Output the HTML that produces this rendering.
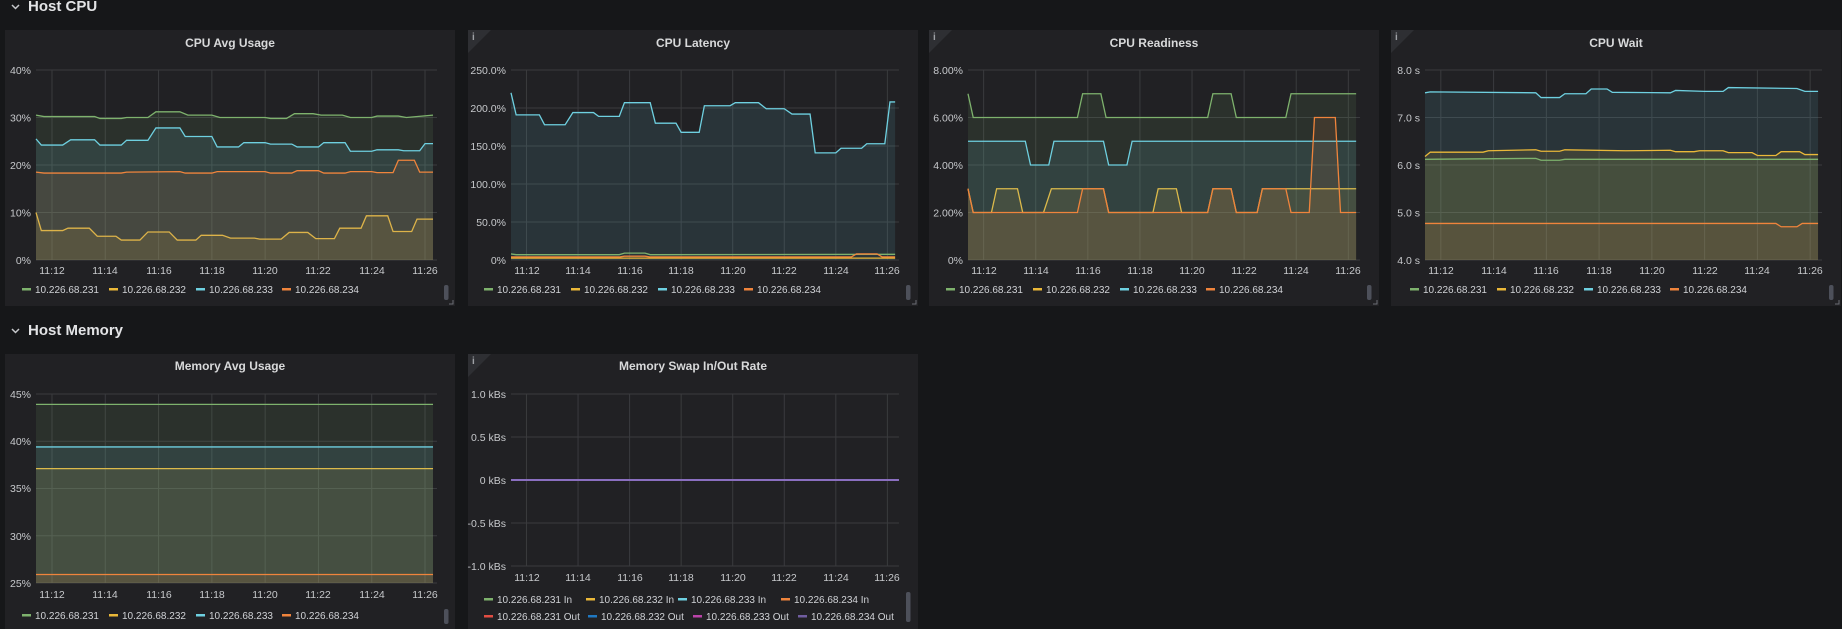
<!DOCTYPE html>
<html><head><meta charset="utf-8"><style>
html,body{margin:0;padding:0;background:#161719;width:1842px;height:629px;overflow:hidden}
svg{display:block}
text{font-family:"Liberation Sans",sans-serif}
.t{font-size:12px;fill:#d8d9da;text-anchor:middle;font-weight:bold}
.ya{font-size:10.5px;fill:#c7c9cc;text-anchor:end}
.xa{font-size:10.5px;fill:#c7c9cc;text-anchor:middle}
.lg{font-size:10px;fill:#d0d2d6}
.h{font-size:15px;fill:#e3e4e6;font-weight:bold}
.g line{stroke:#3a3b3e;vector-effect:non-scaling-stroke;stroke-width:1}
.s polyline{fill:none;stroke-width:1.3;vector-effect:non-scaling-stroke}
.s polygon{stroke:none;fill-opacity:.11}
</style></head><body>
<svg width="1842" height="629" viewBox="0 0 1842 629" xmlns="http://www.w3.org/2000/svg">
<rect width="1842" height="629" fill="#161719"/>
<path d="M12 5 l3.5 3.5 l3.5 -3.5" fill="none" stroke="#c7c9cc" stroke-width="1.5"/>
<text class="h" x="28" y="11">Host CPU</text>
<path d="M12 329 l3.5 3.5 l3.5 -3.5" fill="none" stroke="#c7c9cc" stroke-width="1.5"/>
<text class="h" x="28" y="335">Host Memory</text>

<g fill="#212124">
<rect x="5" y="30" width="450" height="276"/>
<rect x="468" y="30" width="450" height="276"/>
<rect x="929" y="30" width="450" height="276"/>
<rect x="1391" y="30" width="450" height="276"/>
<rect x="5" y="354" width="450" height="280"/>
<rect x="468" y="354" width="450" height="280"/>
</g>
<g fill="#2e2f33">
<path d="M468 30 h23 l-23 23z"/><path d="M929 30 h23 l-23 23z"/><path d="M1391 30 h23 l-23 23z"/><path d="M468 354 h23 l-23 23z"/>
</g>
<g font-family="Liberation Serif,serif" font-size="10" fill="#9fa1a6" font-weight="bold">
<text x="472" y="40">i</text><text x="933" y="40">i</text><text x="1395" y="40">i</text><text x="472" y="364">i</text>
</g>
<text class="t" x="230" y="47">CPU Avg Usage</text>
<text class="t" x="693" y="47">CPU Latency</text>
<text class="t" x="1154" y="47">CPU Readiness</text>
<text class="t" x="1616" y="47">CPU Wait</text>
<text class="t" x="230" y="370">Memory Avg Usage</text>
<text class="t" x="693" y="370">Memory Swap In/Out Rate</text>

<g transform="translate(36,260) scale(26.645,-4.75) translate(-11.4,0)">
<g class="g"><line x1="11.4" x2="26.45" y1="40" y2="40"/><line x1="11.4" x2="26.45" y1="30" y2="30"/><line x1="11.4" x2="26.45" y1="20" y2="20"/><line x1="11.4" x2="26.45" y1="10" y2="10"/><line x1="11.4" x2="26.45" y1="0" y2="0"/>
<line x1="12" x2="12" y1="0" y2="40"/><line x1="14" x2="14" y1="0" y2="40"/><line x1="16" x2="16" y1="0" y2="40"/><line x1="18" x2="18" y1="0" y2="40"/><line x1="20" x2="20" y1="0" y2="40"/><line x1="22" x2="22" y1="0" y2="40"/><line x1="24" x2="24" y1="0" y2="40"/><line x1="26" x2="26" y1="0" y2="40"/></g>
<g class="s">
<polygon fill="#7eb26d" points="11.4,0 11.4,30.5 11.7,30.2 13.6,30.2 13.8,29.8 14.6,29.8 14.8,30 15.6,30 15.9,31.2 16.8,31.2 17.1,30.5 18,30.5 18.3,30 20,30 20.2,29.8 20.8,29.8 21.1,30.8 21.8,30.8 22.1,30.5 22.9,30.5 23.2,30 24,30 24.2,30.3 25,30.3 25.3,30 26.3,30.5 26.3,0"/>
<polyline stroke="#7eb26d" points="11.4,30.5 11.7,30.2 13.6,30.2 13.8,29.8 14.6,29.8 14.8,30 15.6,30 15.9,31.2 16.8,31.2 17.1,30.5 18,30.5 18.3,30 20,30 20.2,29.8 20.8,29.8 21.1,30.8 21.8,30.8 22.1,30.5 22.9,30.5 23.2,30 24,30 24.2,30.3 25,30.3 25.3,30 26.3,30.5"/>
<polygon fill="#eab839" points="11.4,0 11.4,10 11.6,6.2 12.4,6.2 12.6,6.7 13.4,6.7 13.7,5 14.4,5 14.6,4.2 15.3,4.2 15.6,5.9 16.4,5.9 16.7,4.2 17.4,4.2 17.6,5.2 18.4,5.2 18.7,4.6 19.6,4.6 19.8,4.4 20.6,4.4 20.9,5.8 21.6,5.8 21.9,4.5 22.6,4.5 22.8,6.7 23.6,6.7 23.8,9.3 24.6,9.3 24.8,6 25.5,6 25.7,8.6 26.3,8.6 26.3,0"/>
<polyline stroke="#eab839" points="11.4,10 11.6,6.2 12.4,6.2 12.6,6.7 13.4,6.7 13.7,5 14.4,5 14.6,4.2 15.3,4.2 15.6,5.9 16.4,5.9 16.7,4.2 17.4,4.2 17.6,5.2 18.4,5.2 18.7,4.6 19.6,4.6 19.8,4.4 20.6,4.4 20.9,5.8 21.6,5.8 21.9,4.5 22.6,4.5 22.8,6.7 23.6,6.7 23.8,9.3 24.6,9.3 24.8,6 25.5,6 25.7,8.6 26.3,8.6"/>
<polygon fill="#6ed0e0" points="11.4,0 11.4,25.5 11.6,24.2 12.4,24.2 12.7,25.3 13.6,25.3 13.8,24.2 14.6,24.2 14.8,25.2 15.6,25.2 15.9,27.8 16.8,27.8 17,26 18,26 18.2,23.8 19,23.8 19.2,24.7 20,24.7 20.2,24.4 21,24.4 21.2,23.8 22,23.8 22.2,24.7 23,24.7 23.2,22.9 24,22.9 24.2,23.2 25,23.2 25.2,23 25.8,23 26,24.5 26.3,24.5 26.3,0"/>
<polyline stroke="#6ed0e0" points="11.4,25.5 11.6,24.2 12.4,24.2 12.7,25.3 13.6,25.3 13.8,24.2 14.6,24.2 14.8,25.2 15.6,25.2 15.9,27.8 16.8,27.8 17,26 18,26 18.2,23.8 19,23.8 19.2,24.7 20,24.7 20.2,24.4 21,24.4 21.2,23.8 22,23.8 22.2,24.7 23,24.7 23.2,22.9 24,22.9 24.2,23.2 25,23.2 25.2,23 25.8,23 26,24.5 26.3,24.5"/>
<polygon fill="#ef843c" points="11.4,0 11.4,18.5 11.7,18.3 14.6,18.3 14.8,18.5 16.8,18.6 17,18.3 18,18.3 18.2,18.6 20,18.6 20.2,18.3 21,18.3 21.2,18.8 22,18.8 22.2,18.3 23,18.3 23.2,18.6 24,18.6 24.2,18.4 24.8,18.4 25,21 25.6,21 25.8,18.5 26.3,18.5 26.3,0"/>
<polyline stroke="#ef843c" points="11.4,18.5 11.7,18.3 14.6,18.3 14.8,18.5 16.8,18.6 17,18.3 18,18.3 18.2,18.6 20,18.6 20.2,18.3 21,18.3 21.2,18.8 22,18.8 22.2,18.3 23,18.3 23.2,18.6 24,18.6 24.2,18.4 24.8,18.4 25,21 25.6,21 25.8,18.5 26.3,18.5"/>
</g></g>
<g class="ya"><text x="31" y="74">40%</text><text x="31" y="121.5">30%</text><text x="31" y="169">20%</text><text x="31" y="216.5">10%</text><text x="31" y="264">0%</text></g>
<g class="xa"><text x="52" y="274">11:12</text><text x="105" y="274">11:14</text><text x="159" y="274">11:16</text><text x="212" y="274">11:18</text><text x="265" y="274">11:20</text><text x="318" y="274">11:22</text><text x="372" y="274">11:24</text><text x="425" y="274">11:26</text></g>

<g transform="translate(511,260) scale(25.78,-0.76) translate(-11.4,0)">
<g class="g"><line x1="11.4" x2="26.45" y1="250" y2="250"/><line x1="11.4" x2="26.45" y1="200" y2="200"/><line x1="11.4" x2="26.45" y1="150" y2="150"/><line x1="11.4" x2="26.45" y1="100" y2="100"/><line x1="11.4" x2="26.45" y1="50" y2="50"/><line x1="11.4" x2="26.45" y1="0" y2="0"/>
<line x1="12" x2="12" y1="0" y2="250"/><line x1="14" x2="14" y1="0" y2="250"/><line x1="16" x2="16" y1="0" y2="250"/><line x1="18" x2="18" y1="0" y2="250"/><line x1="20" x2="20" y1="0" y2="250"/><line x1="22" x2="22" y1="0" y2="250"/><line x1="24" x2="24" y1="0" y2="250"/><line x1="26" x2="26" y1="0" y2="250"/></g>
<g class="s">
<polygon fill="#6ed0e0" points="11.4,0 11.4,220 11.6,191 12.5,191 12.7,178 13.5,178 13.8,194 14.6,194 14.8,189 15.6,189 15.8,207 16.8,207 17,180 17.8,180 18,168 18.7,168 18.9,203 19.9,203 20.1,207 21,207 21.3,199 22,199 22.3,192 23,192 23.2,141 24,141 24.2,147 25,147 25.2,153 25.9,153 26.1,208 26.3,208 26.3,0"/>
<polyline stroke="#6ed0e0" points="11.4,220 11.6,191 12.5,191 12.7,178 13.5,178 13.8,194 14.6,194 14.8,189 15.6,189 15.8,207 16.8,207 17,180 17.8,180 18,168 18.7,168 18.9,203 19.9,203 20.1,207 21,207 21.3,199 22,199 22.3,192 23,192 23.2,141 24,141 24.2,147 25,147 25.2,153 25.9,153 26.1,208 26.3,208"/>
<polyline stroke="#7eb26d" points="11.4,8 11.6,7 15.6,7 15.8,9 16.6,9 16.8,7 26.3,7.5"/>
<polyline stroke="#eab839" points="11.4,2.5 26.3,2.5"/>
<polyline stroke="#ef843c" points="11.4,4 15.6,4 15.8,5 16.6,5 16.8,4 24.6,4 24.8,8 25.6,8 25.8,4 26.3,4"/>
</g></g>
<g class="ya"><text x="506" y="74">250.0%</text><text x="506" y="112">200.0%</text><text x="506" y="150">150.0%</text><text x="506" y="188">100.0%</text><text x="506" y="226">50.0%</text><text x="506" y="264">0%</text></g>
<g class="xa"><text x="527" y="274">11:12</text><text x="578" y="274">11:14</text><text x="630" y="274">11:16</text><text x="681" y="274">11:18</text><text x="733" y="274">11:20</text><text x="784" y="274">11:22</text><text x="836" y="274">11:24</text><text x="887" y="274">11:26</text></g>

<g transform="translate(968,260) scale(26.05,-23.75) translate(-11.4,0)">
<g class="g"><line x1="11.4" x2="26.45" y1="8" y2="8"/><line x1="11.4" x2="26.45" y1="6" y2="6"/><line x1="11.4" x2="26.45" y1="4" y2="4"/><line x1="11.4" x2="26.45" y1="2" y2="2"/><line x1="11.4" x2="26.45" y1="0" y2="0"/>
<line x1="12" x2="12" y1="0" y2="8"/><line x1="14" x2="14" y1="0" y2="8"/><line x1="16" x2="16" y1="0" y2="8"/><line x1="18" x2="18" y1="0" y2="8"/><line x1="20" x2="20" y1="0" y2="8"/><line x1="22" x2="22" y1="0" y2="8"/><line x1="24" x2="24" y1="0" y2="8"/><line x1="26" x2="26" y1="0" y2="8"/></g>
<g class="s">
<polygon fill="#7eb26d" points="11.4,0 11.4,7 11.6,6 15.6,6 15.8,7 16.5,7 16.7,6 20.6,6 20.8,7 21.5,7 21.7,6 23.6,6 23.8,7 26.3,7 26.3,0"/>
<polyline stroke="#7eb26d" points="11.4,7 11.6,6 15.6,6 15.8,7 16.5,7 16.7,6 20.6,6 20.8,7 21.5,7 21.7,6 23.6,6 23.8,7 26.3,7"/>
<polygon fill="#eab839" points="11.4,0 11.4,3 11.6,2 12.3,2 12.5,3 13.3,3 13.5,2 14.3,2 14.6,3 16.6,3 16.8,2 18.5,2 18.7,3 19.4,3 19.6,2 20.6,2 20.8,3 21.5,3 21.7,2 22.5,2 22.7,3 26.3,3 26.3,0"/>
<polyline stroke="#eab839" points="11.4,3 11.6,2 12.3,2 12.5,3 13.3,3 13.5,2 14.3,2 14.6,3 16.6,3 16.8,2 18.5,2 18.7,3 19.4,3 19.6,2 20.6,2 20.8,3 21.5,3 21.7,2 22.5,2 22.7,3 26.3,3"/>
<polygon fill="#6ed0e0" points="11.4,0 11.4,5 13.6,5 13.8,4 14.5,4 14.7,5 16.6,5 16.8,4 17.5,4 17.7,5 26.3,5 26.3,0"/>
<polyline stroke="#6ed0e0" points="11.4,5 13.6,5 13.8,4 14.5,4 14.7,5 16.6,5 16.8,4 17.5,4 17.7,5 26.3,5"/>
<polygon fill="#ef843c" points="11.4,0 11.4,3 11.6,2 15.6,2 15.8,3 16.6,3 16.8,2 20.6,2 20.8,3 21.5,3 21.7,2 22.5,2 22.7,3 23.6,3 23.8,2 24.5,2 24.7,6 25.5,6 25.7,2 26.3,2 26.3,0"/>
<polyline stroke="#ef843c" points="11.4,3 11.6,2 15.6,2 15.8,3 16.6,3 16.8,2 20.6,2 20.8,3 21.5,3 21.7,2 22.5,2 22.7,3 23.6,3 23.8,2 24.5,2 24.7,6 25.5,6 25.7,2 26.3,2"/>
</g></g>
<g class="ya"><text x="963" y="74">8.00%</text><text x="963" y="121.5">6.00%</text><text x="963" y="169">4.00%</text><text x="963" y="216.5">2.00%</text><text x="963" y="264">0%</text></g>
<g class="xa"><text x="984" y="274">11:12</text><text x="1036" y="274">11:14</text><text x="1088" y="274">11:16</text><text x="1140" y="274">11:18</text><text x="1192" y="274">11:20</text><text x="1244" y="274">11:22</text><text x="1296" y="274">11:24</text><text x="1348" y="274">11:26</text></g>

<g transform="translate(1425,260) scale(26.38,-47.5) translate(-11.4,-4)">
<g class="g"><line x1="11.4" x2="26.45" y1="8" y2="8"/><line x1="11.4" x2="26.45" y1="7" y2="7"/><line x1="11.4" x2="26.45" y1="6" y2="6"/><line x1="11.4" x2="26.45" y1="5" y2="5"/><line x1="11.4" x2="26.45" y1="4" y2="4"/>
<line x1="12" x2="12" y1="4" y2="8"/><line x1="14" x2="14" y1="4" y2="8"/><line x1="16" x2="16" y1="4" y2="8"/><line x1="18" x2="18" y1="4" y2="8"/><line x1="20" x2="20" y1="4" y2="8"/><line x1="22" x2="22" y1="4" y2="8"/><line x1="24" x2="24" y1="4" y2="8"/><line x1="26" x2="26" y1="4" y2="8"/></g>
<g class="s">
<polygon fill="#6ed0e0" points="11.4,4 11.4,7.52 11.6,7.54 15.6,7.52 15.8,7.42 16.5,7.42 16.7,7.5 17.5,7.5 17.7,7.6 18.3,7.6 18.5,7.53 20.7,7.52 20.9,7.57 22,7.55 22.7,7.55 22.9,7.63 25.5,7.61 25.8,7.55 26.3,7.55 26.3,4"/>
<polyline stroke="#6ed0e0" points="11.4,7.52 11.6,7.54 15.6,7.52 15.8,7.42 16.5,7.42 16.7,7.5 17.5,7.5 17.7,7.6 18.3,7.6 18.5,7.53 20.7,7.52 20.9,7.57 22,7.55 22.7,7.55 22.9,7.63 25.5,7.61 25.8,7.55 26.3,7.55"/>
<polygon fill="#eab839" points="11.4,4 11.4,6.18 11.6,6.27 13.6,6.27 13.8,6.3 15.6,6.32 15.8,6.29 16.5,6.29 16.7,6.32 19,6.3 20.7,6.31 20.9,6.28 21.6,6.28 21.8,6.3 22.7,6.3 22.9,6.26 23.8,6.26 24,6.2 24.7,6.2 24.9,6.28 25.6,6.28 25.8,6.22 26.3,6.22 26.3,4"/>
<polyline stroke="#eab839" points="11.4,6.18 11.6,6.27 13.6,6.27 13.8,6.3 15.6,6.32 15.8,6.29 16.5,6.29 16.7,6.32 19,6.3 20.7,6.31 20.9,6.28 21.6,6.28 21.8,6.3 22.7,6.3 22.9,6.26 23.8,6.26 24,6.2 24.7,6.2 24.9,6.28 25.6,6.28 25.8,6.22 26.3,6.22"/>
<polygon fill="#7eb26d" points="11.4,4 11.4,6.12 15.6,6.14 15.8,6.1 16.5,6.1 16.7,6.12 26.3,6.12 26.3,4"/>
<polyline stroke="#7eb26d" points="11.4,6.12 15.6,6.14 15.8,6.1 16.5,6.1 16.7,6.12 26.3,6.12"/>
<polygon fill="#ef843c" points="11.4,4 11.4,4.77 24.7,4.77 24.9,4.7 25.5,4.7 25.7,4.77 26.3,4.77 26.3,4"/>
<polyline stroke="#ef843c" points="11.4,4.77 24.7,4.77 24.9,4.7 25.5,4.7 25.7,4.77 26.3,4.77"/>
</g></g>
<g class="ya"><text x="1420" y="74">8.0 s</text><text x="1420" y="121.5">7.0 s</text><text x="1420" y="169">6.0 s</text><text x="1420" y="216.5">5.0 s</text><text x="1420" y="264">4.0 s</text></g>
<g class="xa"><text x="1441" y="274">11:12</text><text x="1494" y="274">11:14</text><text x="1546" y="274">11:16</text><text x="1599" y="274">11:18</text><text x="1652" y="274">11:20</text><text x="1705" y="274">11:22</text><text x="1757" y="274">11:24</text><text x="1810" y="274">11:26</text></g>

<g transform="translate(36,583) scale(26.645,-9.45) translate(-11.4,-25)">
<g class="g"><line x1="11.4" x2="26.45" y1="45" y2="45"/><line x1="11.4" x2="26.45" y1="40" y2="40"/><line x1="11.4" x2="26.45" y1="35" y2="35"/><line x1="11.4" x2="26.45" y1="30" y2="30"/><line x1="11.4" x2="26.45" y1="25" y2="25"/>
<line x1="12" x2="12" y1="25" y2="45"/><line x1="14" x2="14" y1="25" y2="45"/><line x1="16" x2="16" y1="25" y2="45"/><line x1="18" x2="18" y1="25" y2="45"/><line x1="20" x2="20" y1="25" y2="45"/><line x1="22" x2="22" y1="25" y2="45"/><line x1="24" x2="24" y1="25" y2="45"/><line x1="26" x2="26" y1="25" y2="45"/></g>
<g class="s">
<polygon fill="#7eb26d" points="11.4,25 11.4,43.9 26.3,43.9 26.3,25"/><polyline stroke="#7eb26d" points="11.4,43.9 26.3,43.9"/>
<polygon fill="#eab839" points="11.4,25 11.4,37.1 26.3,37.1 26.3,25"/><polyline stroke="#eab839" points="11.4,37.1 26.3,37.1"/>
<polygon fill="#6ed0e0" points="11.4,25 11.4,39.4 26.3,39.4 26.3,25"/><polyline stroke="#6ed0e0" points="11.4,39.4 26.3,39.4"/>
<polygon fill="#ef843c" points="11.4,25 11.4,25.9 26.3,25.9 26.3,25"/><polyline stroke="#ef843c" points="11.4,25.9 26.3,25.9"/>
</g></g>
<g class="ya"><text x="31" y="398">45%</text><text x="31" y="445">40%</text><text x="31" y="492">35%</text><text x="31" y="540">30%</text><text x="31" y="587">25%</text></g>
<g class="xa"><text x="52" y="598">11:12</text><text x="105" y="598">11:14</text><text x="159" y="598">11:16</text><text x="212" y="598">11:18</text><text x="265" y="598">11:20</text><text x="318" y="598">11:22</text><text x="372" y="598">11:24</text><text x="425" y="598">11:26</text></g>

<g transform="translate(511,566) scale(25.78,-86) translate(-11.4,1)">
<g class="g"><line x1="11.4" x2="26.45" y1="1" y2="1"/><line x1="11.4" x2="26.45" y1="0.5" y2="0.5"/><line x1="11.4" x2="26.45" y1="0" y2="0"/><line x1="11.4" x2="26.45" y1="-0.5" y2="-0.5"/><line x1="11.4" x2="26.45" y1="-1" y2="-1"/>
<line x1="12" x2="12" y1="-1" y2="1"/><line x1="14" x2="14" y1="-1" y2="1"/><line x1="16" x2="16" y1="-1" y2="1"/><line x1="18" x2="18" y1="-1" y2="1"/><line x1="20" x2="20" y1="-1" y2="1"/><line x1="22" x2="22" y1="-1" y2="1"/><line x1="24" x2="24" y1="-1" y2="1"/><line x1="26" x2="26" y1="-1" y2="1"/></g>
<g class="s"><polyline stroke="#8a6fc0" points="11.4,0 26.45,0" style="stroke-width:2"/></g></g>
<g class="ya"><text x="506" y="398">1.0 kBs</text><text x="506" y="441">0.5 kBs</text><text x="506" y="484">0 kBs</text><text x="506" y="527">-0.5 kBs</text><text x="506" y="570">-1.0 kBs</text></g>
<g class="xa"><text x="527" y="581">11:12</text><text x="578" y="581">11:14</text><text x="630" y="581">11:16</text><text x="681" y="581">11:18</text><text x="733" y="581">11:20</text><text x="784" y="581">11:22</text><text x="836" y="581">11:24</text><text x="887" y="581">11:26</text></g>

<g>
<rect x="22" y="288" width="9" height="2.5" fill="#7eb26d"/><text class="lg" x="35" y="293">10.226.68.231</text>
<rect x="109" y="288" width="9" height="2.5" fill="#eab839"/><text class="lg" x="122" y="293">10.226.68.232</text>
<rect x="196" y="288" width="9" height="2.5" fill="#6ed0e0"/><text class="lg" x="209" y="293">10.226.68.233</text>
<rect x="282" y="288" width="9" height="2.5" fill="#ef843c"/><text class="lg" x="295" y="293">10.226.68.234</text>
</g>
<g transform="translate(462,0)">
<rect x="22" y="288" width="9" height="2.5" fill="#7eb26d"/><text class="lg" x="35" y="293">10.226.68.231</text>
<rect x="109" y="288" width="9" height="2.5" fill="#eab839"/><text class="lg" x="122" y="293">10.226.68.232</text>
<rect x="196" y="288" width="9" height="2.5" fill="#6ed0e0"/><text class="lg" x="209" y="293">10.226.68.233</text>
<rect x="282" y="288" width="9" height="2.5" fill="#ef843c"/><text class="lg" x="295" y="293">10.226.68.234</text>
</g>
<g transform="translate(924,0)">
<rect x="22" y="288" width="9" height="2.5" fill="#7eb26d"/><text class="lg" x="35" y="293">10.226.68.231</text>
<rect x="109" y="288" width="9" height="2.5" fill="#eab839"/><text class="lg" x="122" y="293">10.226.68.232</text>
<rect x="196" y="288" width="9" height="2.5" fill="#6ed0e0"/><text class="lg" x="209" y="293">10.226.68.233</text>
<rect x="282" y="288" width="9" height="2.5" fill="#ef843c"/><text class="lg" x="295" y="293">10.226.68.234</text>
</g>
<g transform="translate(1388,0)">
<rect x="22" y="288" width="9" height="2.5" fill="#7eb26d"/><text class="lg" x="35" y="293">10.226.68.231</text>
<rect x="109" y="288" width="9" height="2.5" fill="#eab839"/><text class="lg" x="122" y="293">10.226.68.232</text>
<rect x="196" y="288" width="9" height="2.5" fill="#6ed0e0"/><text class="lg" x="209" y="293">10.226.68.233</text>
<rect x="282" y="288" width="9" height="2.5" fill="#ef843c"/><text class="lg" x="295" y="293">10.226.68.234</text>
</g>
<g transform="translate(0,326)">
<rect x="22" y="288" width="9" height="2.5" fill="#7eb26d"/><text class="lg" x="35" y="293">10.226.68.231</text>
<rect x="109" y="288" width="9" height="2.5" fill="#eab839"/><text class="lg" x="122" y="293">10.226.68.232</text>
<rect x="196" y="288" width="9" height="2.5" fill="#6ed0e0"/><text class="lg" x="209" y="293">10.226.68.233</text>
<rect x="282" y="288" width="9" height="2.5" fill="#ef843c"/><text class="lg" x="295" y="293">10.226.68.234</text>
</g>
<rect x="484" y="598" width="9" height="2.5" fill="#7eb26d"/><text class="lg" x="497" y="603">10.226.68.231 In</text>
<rect x="586" y="598" width="9" height="2.5" fill="#eab839"/><text class="lg" x="599" y="603">10.226.68.232 In</text>
<rect x="678" y="598" width="9" height="2.5" fill="#6ed0e0"/><text class="lg" x="691" y="603">10.226.68.233 In</text>
<rect x="781" y="598" width="9" height="2.5" fill="#ef843c"/><text class="lg" x="794" y="603">10.226.68.234 In</text>
<rect x="484" y="615" width="9" height="2.5" fill="#e24d42"/><text class="lg" x="497" y="620">10.226.68.231 Out</text>
<rect x="588" y="615" width="9" height="2.5" fill="#1f78c1"/><text class="lg" x="601" y="620">10.226.68.232 Out</text>
<rect x="693" y="615" width="9" height="2.5" fill="#ba43a9"/><text class="lg" x="706" y="620">10.226.68.233 Out</text>
<rect x="798" y="615" width="9" height="2.5" fill="#705da0"/><text class="lg" x="811" y="620">10.226.68.234 Out</text>

<g fill="#4d505a">
<rect x="444" y="285" width="4.5" height="15" rx="2"/>
<rect x="906" y="285" width="4.5" height="15" rx="2"/>
<rect x="1367" y="285" width="4.5" height="15" rx="2"/>
<rect x="1829" y="285" width="4.5" height="15" rx="2"/>
<rect x="444" y="609" width="4.5" height="15" rx="2"/>
<rect x="906" y="592" width="4.5" height="30" rx="2"/>
</g>
<g stroke="#6a6d75" fill="none" stroke-width="1">
<path d="M453 300 v4 h-4"/><path d="M916 300 v4 h-4"/><path d="M1377 300 v4 h-4"/><path d="M1839 300 v4 h-4"/>
</g>
</svg>
</body></html>
